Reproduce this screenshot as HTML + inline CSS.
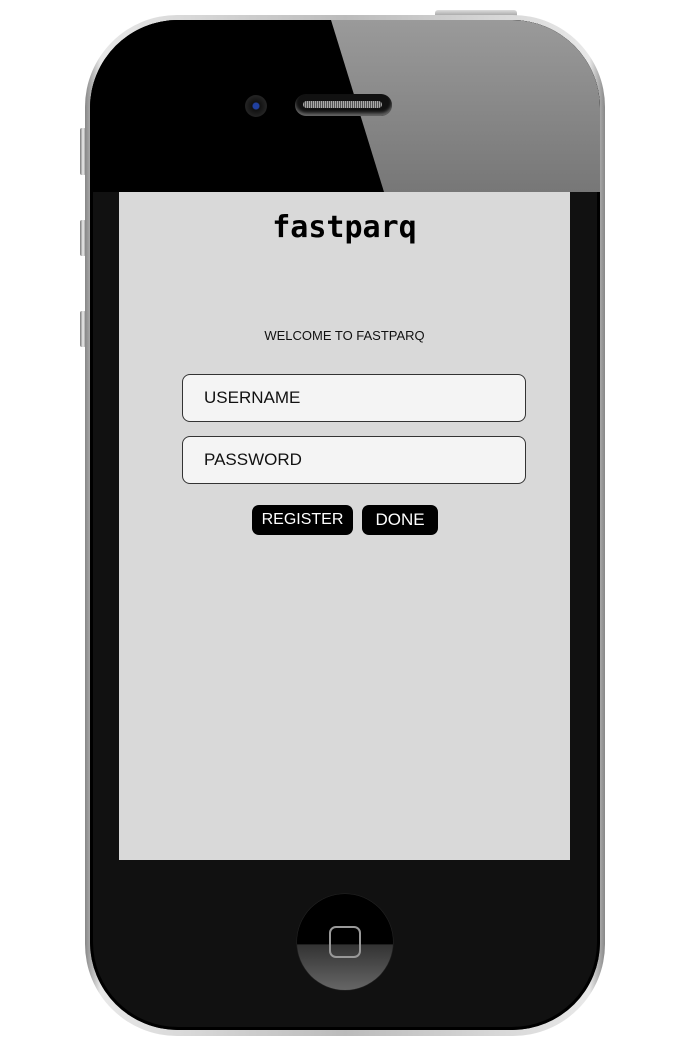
<!DOCTYPE html>
<html><head><meta charset="utf-8"><style>
html,body{margin:0;padding:0;background:#fff;width:698px;height:1051px;overflow:hidden;font-family:"Liberation Sans",sans-serif}
.abs{position:absolute}
.outer{left:85px;top:15px;width:520px;height:1021px;border-radius:92px;background:linear-gradient(90deg,#888,#e8e8e8 3%,#bbb 50%,#e8e8e8 97%,#888);}
.inner{left:90px;top:20px;width:510px;height:1010px;border-radius:88px;background:#111;box-shadow:inset 0 0 0 3px #000;overflow:hidden}
.glare{left:0;top:0;width:510px;height:172px}
.screen{left:119px;top:192px;width:451px;height:668px;background:#d9d9d9}
.btn-side{background:linear-gradient(90deg,#777,#eee,#888);border-radius:2px}
.inp{left:182px;width:342px;height:46px;border:1px solid #333;border-radius:8px;background:#f4f4f4;font-size:17px;line-height:46px;text-indent:21px;color:#111}
.b{top:505px;height:30px;background:#000;color:#fff;border-radius:7px;font-size:17px;line-height:30px;text-align:center}
</style></head><body>
<div class="abs btn-side" style="left:80px;top:128px;width:6px;height:47px"></div>
<div class="abs btn-side" style="left:80px;top:220px;width:6px;height:36px"></div>
<div class="abs btn-side" style="left:80px;top:311px;width:6px;height:36px"></div>
<div class="abs" style="left:435px;top:10px;width:82px;height:7px;background:linear-gradient(#ddd,#999);border-radius:3px 3px 0 0"></div>
<div class="abs outer"></div>
<div class="abs inner">
 <svg class="abs glare" width="510" height="172"><defs><linearGradient id="g" x1="0" y1="0" x2="0" y2="1"><stop offset="0" stop-color="#9a9a9a"/><stop offset="1" stop-color="#777"/></linearGradient></defs>
 <rect width="510" height="172" fill="#000"/>
 <polygon points="241,0 510,0 510,172 294,172" fill="url(#g)"/></svg>
 <div class="abs" style="left:155px;top:75px;width:22px;height:22px;border-radius:50%;background:radial-gradient(circle,#2040a0 0 3px,#111 4px,#222 10px)"></div>
 <div class="abs" style="left:205px;top:74px;width:97px;height:22px;border-radius:11px;background:#111;box-shadow:inset 0 -3px 3px #666"></div>
 <div class="abs" style="left:213px;top:81px;width:79px;height:7px;border-radius:4px;background:repeating-linear-gradient(90deg,#aaa 0 1px,#555 1px 2px)"></div>
 <div class="abs" style="left:207px;top:874px;width:96px;height:96px;border-radius:50%;background:linear-gradient(#000 0,#000 52%,#333 53%,#666 100%);box-shadow:0 0 1px #555"></div>
 <div class="abs" style="left:239px;top:906px;width:28px;height:28px;border:2px solid #999;border-radius:7px"></div>
</div>
<div class="abs screen"></div>
<div class="abs" style="left:119px;top:210px;width:451px;text-align:center;font-family:'DejaVu Sans Mono',monospace;font-weight:bold;font-size:30px;color:#000">fastparq</div>
<div class="abs" style="left:119px;top:328px;width:451px;text-align:center;font-size:13px;color:#111">WELCOME TO FASTPARQ</div>
<div class="abs inp" style="top:374px">USERNAME</div>
<div class="abs inp" style="top:436px">PASSWORD</div>
<div class="abs b" style="left:252px;width:101px;font-size:16px">REGISTER</div>
<div class="abs b" style="left:362px;width:76px">DONE</div>
</body></html>
